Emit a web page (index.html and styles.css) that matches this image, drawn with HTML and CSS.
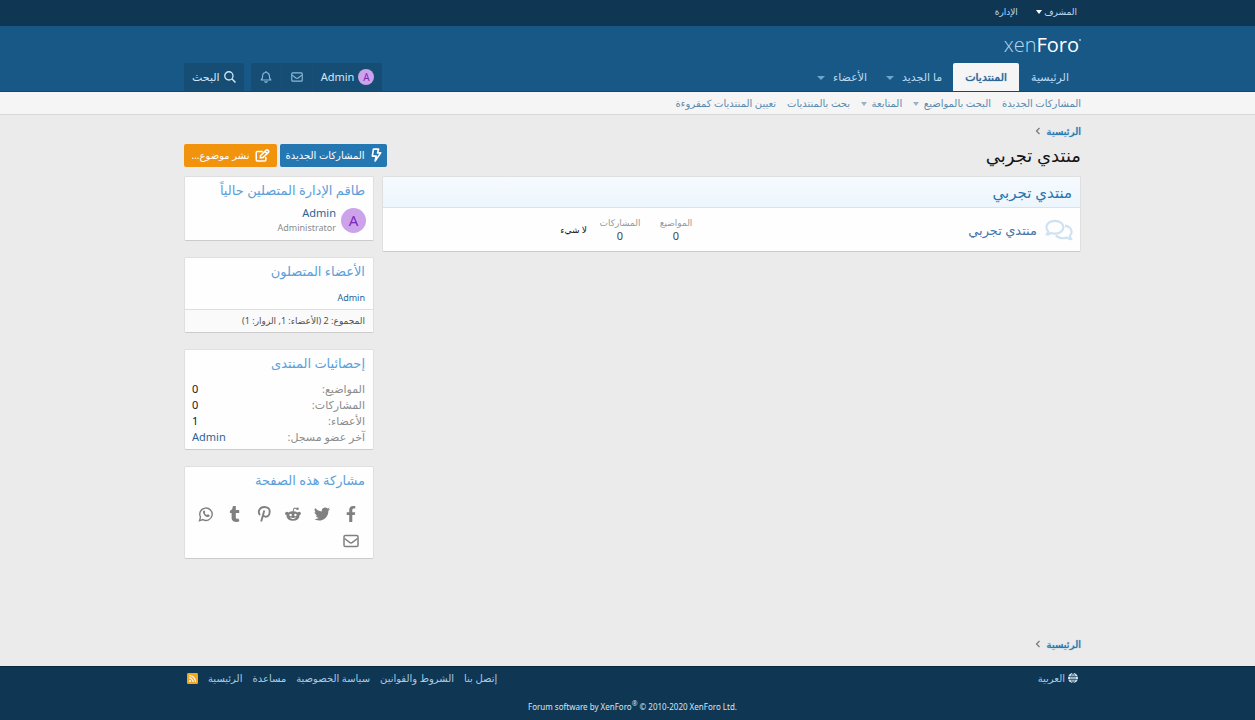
FILE: index.html
```html
<!DOCTYPE html>
<html lang="ar" dir="rtl">
<head>
<meta charset="utf-8">
<title>منتدي تجربي</title>
<link rel="stylesheet" href="styles.css">
</head>
<body>
<svg class="sprite" aria-hidden="true">
  <symbol id="mail" viewBox="0 0 16 16"><rect x="1" y="2.5" width="14" height="11" rx="1.3" fill="none" stroke="currentColor" stroke-width="1.5"/><path d="M1.5 5.5 L6.6 9.4 Q8 10.4 9.4 9.4 L14.5 5.5" fill="none" stroke="currentColor" stroke-width="1.5"/></symbol>
</svg>
<div class="staff-bar">
  <div class="inner staff-links">
    <a href="#">المشرف <span class="caret"></span></a>
    <a href="#">الإدارة</a>
  </div>
</div>
<header class="header">
  <div class="inner">
    <a class="logo" href="#" aria-label="xenForo"><span class="logo-thin">xen</span><span class="logo-bold">Foro</span><span class="logo-dot"></span></a>
  </div>
  <div class="inner nav">
    <nav class="tabs">
      <a class="tab" href="#">الرئيسية</a>
      <a class="tab tab-active" href="#">المنتديات</a>
      <a class="tab tab-menu" href="#">ما الجديد <span class="caret"></span></a>
      <a class="tab tab-menu" href="#">الأعضاء <span class="caret"></span></a>
    </nav>
    <div class="tools">
      <div class="tool-group">
        <a class="tool tool-user" href="#"><span class="avatar avatar-small">A</span>Admin</a>
        <a class="tool tool-icon" href="#" aria-label="الرسائل"><svg class="icon-small"><use href="#mail"/></svg></a>
        <a class="tool tool-icon" href="#" aria-label="التنبيهات"><svg class="icon-small" viewBox="0 0 16 16"><path d="M8 0v1.500M1.500 12h13c-1.500-1.300-2-2.200-2-5.500A4.400 4.400 0 0 0 3.500 6.500c0 3.300-.5 4.200-2 5.500zM6.200 13.500c.3 2.200 3.300 2.200 3.600 0" fill="none" stroke="currentColor" stroke-width="1.500" stroke-linejoin="round"/></svg></a>
      </div>
      <div class="tool-group">
        <a class="tool" href="#"><svg class="icon-search" viewBox="0 0 16 16"><circle cx="6.500" cy="6.500" r="5.500" fill="none" stroke="currentColor" stroke-width="1.700"/><path d="M10.400 10.400 15.300 15.300" stroke="currentColor" stroke-width="2"/></svg>البحث</a>
      </div>
    </div>
  </div>
</header>
<div class="subnav">
  <nav class="inner subnav-links">
    <a href="#">المشاركات الجديدة</a>
    <a href="#">البحث بالمواضيع <span class="caret"></span></a>
    <a href="#">المتابعة <span class="caret"></span></a>
    <a href="#">بحث بالمنتديات</a>
    <a href="#">تعيين المنتديات كمقروءة</a>
  </nav>
</div>
<main class="inner page">
  <nav class="crumbs"><a href="#">الرئيسية</a><svg class="chevron" viewBox="0 0 6 8"><path d="M4.500 1 1.500 4l3 3" fill="none" stroke="currentColor" stroke-width="1.200"/></svg></nav>
  <div class="title-row">
    <h1>منتدي تجربي</h1>
    <div class="actions">
      <button class="button button-blue" type="button"><svg class="icon-bolt" viewBox="0 0 14 16"><path d="M4 1.200h6L8.800 5.500h3.700L6 15l1.200-5.700H2.700z" fill="none" stroke="currentColor" stroke-width="1.900" stroke-linejoin="round"/></svg>المشاركات الجديدة</button>
      <button class="button button-orange" type="button"><svg class="icon-edit" viewBox="0 0 18 16"><path d="M9.500 3H2.600A1.300 1.300 0 0 0 1.300 4.300v9.200a1.300 1.300 0 0 0 1.300 1.300h9.200a1.300 1.300 0 0 0 1.300-1.300V9.800M6.300 10.900l.4-2.900 6.900-6.600a1.300 1.300 0 0 1 1.800 0l.9.900a1.300 1.300 0 0 1 0 1.800L9.400 10.600zM12 3l2.700 2.700" fill="none" stroke="currentColor" stroke-width="1.900" stroke-linejoin="round"/></svg>نشر موضوع...</button>
    </div>
  </div>
  <div class="columns">
    <section class="block forum">
      <h2 class="forum-head"><a href="#">منتدي تجربي</a></h2>
      <div class="node">
        <svg class="icon-chat" viewBox="0 0 30 24"><g fill="none" stroke="currentColor" stroke-width="2.400" stroke-linejoin="round"><path d="M10.500 2c5.200 0 9.300 3.100 9.300 7s-4.100 7-9.300 7c-1.500 0-2.800-.3-4-.7C5.200 16.200 3.500 17 1.500 17c1-1.100 1.600-2.300 1.800-3.500C2 12.300 1.200 10.700 1.200 9c0-3.900 4.100-7 9.300-7z"/><path d="M21.500 7.300c4.200.6 7.300 3.400 7.300 6.700 0 1.700-.8 3.300-2.100 4.500.2 1.200.8 2.400 1.800 3.500-2 0-3.700-.8-5-1.700-1.200.4-2.500.7-4 .7-3.300 0-6.300-1.300-7.900-3.300"/></g></svg>
        <h3 class="node-title"><a href="#">منتدي تجربي</a></h3>
        <dl class="stat"><dt>المواضيع</dt><dd>0</dd></dl>
        <dl class="stat"><dt>المشاركات</dt><dd>0</dd></dl>
        <div class="last">لا شيء</div>
      </div>
    </section>
    <aside class="sidebar">
      <section class="block">
        <h3 class="block-title"><a href="#">طاقم الإدارة المتصلين حالياً</a></h3>
        <div class="member">
          <span class="avatar">A</span>
          <div class="member-text"><a href="#">Admin</a><span>Administrator</span></div>
        </div>
      </section>
      <section class="block">
        <h3 class="block-title"><a href="#">الأعضاء المتصلون</a></h3>
        <a class="online" href="#">Admin</a>
        <div class="block-foot">المجموع: 2 (الأعضاء: 1, الزوار: 1)</div>
      </section>
      <section class="block">
        <h3 class="block-title">إحصائيات المنتدى</h3>
        <dl class="stats">
          <dt>المواضيع:</dt><dd>0</dd>
          <dt>المشاركات:</dt><dd>0</dd>
          <dt>الأعضاء:</dt><dd>1</dd>
          <dt>آخر عضو مسجل:</dt><dd><a href="#">Admin</a></dd>
        </dl>
      </section>
      <section class="block">
        <h3 class="block-title">مشاركة هذه الصفحة</h3>
        <div class="share">
          <a href="#" aria-label="Facebook"><svg viewBox="0 0 16 16"><path d="M6.200 16V9H3.700V6.200h2.500V4.100C6.200 1.500 7.700 0 10.100 0c1.100 0 2.200.2 2.200.2v2.400H11c-1.300 0-1.700.8-1.700 1.600v2h2.900L11.700 9H9.300v7z" fill="currentColor"/></svg></a>
          <a href="#" aria-label="Twitter"><svg viewBox="0 0 16 16"><path d="M14.400 4.700c.1 5.300-3.800 9.800-9.400 9.800-1.800 0-3.500-.5-5-1.400 1.700.2 3.500-.3 4.800-1.400-1.400 0-2.600-1-3-2.300.5.100 1 .1 1.500-.1C1.700 9 .6 7.700.6 6.100c.5.300 1 .4 1.500.4C.6 5.500.2 3.600 1.100 2.100c1.700 2 4 3.300 6.800 3.400C7.300 3.300 9 1.400 11.100 1.400c1 0 1.800.4 2.400 1 .7-.1 1.500-.4 2.100-.8-.2.800-.8 1.400-1.400 1.800.6-.1 1.300-.2 1.800-.5-.4.700-1 1.300-1.600 1.800z" fill="currentColor"/></svg></a>
          <a href="#" aria-label="Reddit"><svg viewBox="0 0 16 16"><path d="M8 5.800 9 2l3 .7" fill="none" stroke="currentColor"/><circle cx="12.500" cy="2.800" r="1.300" fill="currentColor"/><circle cx="1.900" cy="7.500" r="1.800" fill="currentColor"/><circle cx="14.100" cy="7.500" r="1.800" fill="currentColor"/><ellipse cx="8" cy="10" rx="6.500" ry="4.800" fill="currentColor"/><circle cx="5.600" cy="9" r="1.200" fill="#fff"/><circle cx="10.400" cy="9" r="1.200" fill="#fff"/><path d="M5.500 11.800q2.500 1.800 5 0" fill="none" stroke="#fff"/></svg></a>
          <a href="#" aria-label="Pinterest"><svg viewBox="0 0 16 16"><path d="M4 9C1.300 6 3.500 1 8.400 1c3.300 0 5.300 2 5.300 4.500 0 3.200-1.800 5.300-3.900 5.300-1.300 0-2.100-.6-2.400-1.500M8.300 4.500 5.200 15.500" fill="none" stroke="currentColor" stroke-width="1.900"/></svg></a>
          <a href="#" aria-label="Tumblr"><svg viewBox="0 0 16 16"><path d="M12.400 15c-.7.700-2 1-3.300 1-3.500 0-4.500-2.300-4.500-4.200V7H2.900V4.800C5 4 5.600 2.200 5.800.4c0-.2.200-.4.400-.4h2.600v4h3.400v3H8.800v4.500c0 1.300 1.200 1.600 2.700 1z" fill="currentColor"/></svg></a>
          <a href="#" aria-label="WhatsApp"><svg viewBox="0 0 16 16"><path d="M1.500 14.600l1-3.500A6.200 6.200 0 1 1 4.900 13.600z" fill="none" stroke="currentColor" stroke-width="1.400"/><path d="M5.700 4.600c.6-.4.900-.2 1.100.4l.5 1c.1.400-.4.700-.6 1 .6 1.100 1.300 1.700 2.400 2.100.4-.4.600-.9.900-.8l1.400.6c.5.200.1 1.500-.5 1.800-1.100.7-2.800.1-4.300-1.300C5 7.900 4.400 5.900 5.700 4.600z" fill="currentColor"/></svg></a>
          <a href="#" aria-label="Email"><svg><use href="#mail"/></svg></a>
        </div>
      </section>
    </aside>
  </div>
  <nav class="crumbs crumbs-bottom"><a href="#">الرئيسية</a><svg class="chevron" viewBox="0 0 6 8"><path d="M4.500 1 1.500 4l3 3" fill="none" stroke="currentColor" stroke-width="1.200"/></svg></nav>
</main>
<footer class="footer">
  <div class="inner footer-row">
    <a class="language" href="#"><svg class="icon-globe" viewBox="0 0 16 16"><circle cx="8" cy="8" r="8" fill="#d5e7f4"/><path d="M0 5.500h16M0 10.500h16M8 0v16M8 0C3.500 4 3.500 12 8 16M8 0c4.500 4 4.500 12 0 16" fill="none" stroke="#0f3652"/></svg>العربية</a>
    <nav class="footer-links">
      <a href="#">إتصل بنا</a>
      <a href="#">الشروط والقوانين</a>
      <a href="#">سياسة الخصوصية</a>
      <a href="#">مساعدة</a>
      <a href="#">الرئيسية</a>
      <a class="rss" href="#" aria-label="RSS"><svg viewBox="0 0 12 12"><rect width="12" height="12" rx="1.500" fill="#f5a81c"/><circle cx="3.300" cy="8.700" r="1.100" fill="#fff"/><path d="M2.300 5.300a4.400 4.400 0 0 1 4.400 4.400M2.300 2.700a7 7 0 0 1 7 7" fill="none" stroke="#fff" stroke-width="1.200"/></svg></a>
    </nav>
  </div>
  <div class="inner copyright" dir="ltr">Forum software by XenForo<sup>®</sup> © 2010-2020 XenForo Ltd.</div>
</footer>
</body>
</html>
```
FILE: styles.css
```css
* { box-sizing: border-box; }
body {
  margin: 0;
  min-height: 100vh;
  display: flex;
  flex-direction: column;
  background: #ebebeb;
  color: #141414;
  font: 11px/16px "Noto Sans", "DejaVu Sans", sans-serif;
}
a { color: #2a6496; text-decoration: none; }
h1, h2, h3, dl, dd { margin: 0; font-weight: 400; }
svg { display: block; flex: none; }
.sprite { position: absolute; width: 0; height: 0; }
.inner { width: 100%; padding-right: 174px; padding-left: 184px; }
.caret {
  display: inline-block;
  border: 3px solid transparent;
  border-top: 4px solid currentColor;
  border-bottom: 0;
  vertical-align: 1px;
}

.staff-bar { background: #0f3652; }
.staff-links { display: flex; gap: 18px; height: 26px; align-items: center; padding-right: 178px; padding-bottom: 2px; font-size: 9px; }
.staff-links a { color: #bcdcf2; }
.staff-links .caret { color: #fff; }

.header { background: #185886; border-bottom: 1px solid #13476b; }
.logo { display: flex; direction: ltr; justify-content: flex-end; height: 37px; align-items: center; font: 20px/20px "Open Sans", sans-serif; color: #fff; }
.logo-thin { color: #b5d6ec; font-weight: 300; }
.logo-bold { font-weight: 400; }
.logo-dot { width: 2px; height: 2px; margin-bottom: 10px; border-radius: 50%; background: #a5cae4; }
.nav { display: flex; justify-content: space-between; align-items: flex-end; }
.tabs { display: flex; align-items: flex-end; }
.tab { height: 28px; padding: 0 12px; line-height: 28px; font-size: 11px; color: #bcdcf2; }
.tab-active { background: #f5f5f5; border-radius: 2px 2px 0 0; color: #2a6496; text-shadow: 0 0 1px currentColor; }
.tab-menu { padding: 0 11px 0 8px; }
.tab-menu .caret { margin-right: 5px; color: #6fa5cb; border-width: 4px 4px 0; }
.tools { display: flex; gap: 7px; }
.tool-group { display: flex; height: 28px; background: #154d75; border-radius: 2px 2px 0 0; }
.tool { display: flex; align-items: center; gap: 4px; padding: 0 8px; color: #d5e7f4; font-size: 11px; border-left: 1px solid #17507a; }
.tool:last-child { border-left: 0; }
.tool-icon { padding: 0 9px; color: #8bbadb; }
.icon-small, .icon-search { width: 12px; height: 12px; }
.avatar { display: flex; align-items: center; justify-content: center; flex: none; width: 25px; height: 25px; border-radius: 50%; background: #cca3eb; color: #7a29b8; font-size: 15px; }
.avatar-small { width: 16px; height: 16px; font-size: 10px; }

.subnav { background: #f5f5f5; border-bottom: 1px solid #d8d8d8; }
.subnav-links { display: flex; gap: 11px; height: 22px; align-items: center; font-size: 10px; }
.subnav-links a { color: #5c8aae; }
.subnav-links .caret { margin-right: 2px; color: #9bb2c4; }

.page { flex: 1; display: flex; flex-direction: column; padding-top: 8px; }
.crumbs { display: flex; gap: 6px; align-items: center; font-size: 10px; }
.crumbs a { color: #2577b1; text-shadow: 0 0 1px currentColor; }
.chevron { width: 6px; height: 8px; color: #777; }
.crumbs-bottom { margin-top: auto; margin-bottom: 14px; }
.title-row { display: flex; justify-content: space-between; align-items: center; margin: 3px 0 8px; }
h1 { font-size: 18px; line-height: 26px; }
.actions { display: flex; gap: 3px; }
.button { display: flex; align-items: center; justify-content: center; gap: 5px; height: 23px; padding: 0 5px; border: 0; border-radius: 2px; color: #fff; font: 10px/16px "Noto Sans", "DejaVu Sans", sans-serif; }
.button-blue { min-width: 107px; background: #2577b1; }
.button-orange { min-width: 93px; background: #f2930d; }
.icon-bolt { width: 12px; height: 14px; }
.icon-edit { width: 15px; height: 13px; }

.columns { display: flex; gap: 8px; align-items: flex-start; }
.block { background: #fefefe; border: 1px solid #dfdfdf; border-bottom-color: #cbcbcb; border-radius: 2px; }
.forum { flex: 1; }
.forum-head { padding: 0 8px; line-height: 30px; font-size: 15px; background: linear-gradient(#f5faff, #edf6fd); border-bottom: 1px solid #d8e3ec; }
.forum-head a { color: #2577b1; }
.node { display: flex; align-items: center; height: 43px; padding: 0 7px; }
.icon-chat { width: 28px; height: 22px; color: #cfe2f2; }
.node-title { flex: 1; margin-right: 8px; font-size: 13px; line-height: 20px; }
.node-title a { color: #47a; }
.stat { width: 56px; text-align: center; }
.stat dt { color: #999; font-size: 9px; line-height: 13px; }
.stat dd { font-size: 11px; line-height: 14px; color: #444; }
.last { width: 202px; padding-right: 5px; font-size: 9px; }

.sidebar { flex: none; width: 190px; display: grid; gap: 16px; }
.block-title { padding: 0 8px; line-height: 27px; font-size: 13px; color: #5b9fdb; }
.block-title a { color: inherit; }
.member { display: flex; gap: 5px; padding: 1px 7px 5px; align-items: center; }
.member-text { display: flex; flex-direction: column; font-size: 11px; line-height: 15px; }
.member-text span { color: #8c8c8c; font-size: 9px; }
.online { display: block; padding: 5px 8px 3px; font-size: 9px; }
.block-foot { padding: 3px 8px; background: #fafafa; border-top: 1px solid #dfdfdf; color: #505050; font-size: 9px; }
.stats { display: grid; grid-template-columns: 1fr auto; padding: 4px 8px 4px 7px; font-size: 11px; }
.stats dt { color: #8c8c8c; }
.stats dd { text-align: left; direction: ltr; }
.share { display: flex; flex-wrap: wrap; gap: 11px 13px; padding: 12px 14px 9px 8px; }
.share a { color: #808080; }
.share svg { width: 16px; height: 16px; }

.footer { background: #0f3652; border-top: 1px solid #0a2940; color: #d5e7f4; }
.footer a { color: #a9cce5; }
.footer-row { display: flex; justify-content: space-between; padding-top: 3px; padding-right: 177px; padding-left: 187px; font-size: 10px; }
.language { display: flex; gap: 3px; align-items: center; }
.icon-globe { width: 10px; height: 10px; }
.footer-links { display: flex; gap: 10px; align-items: center; }
.rss svg { width: 11px; height: 11px; }
.copyright { padding-top: 13px; padding-bottom: 5px; text-align: center; font-size: 8px; }
.copyright sup { font-size: 7px; line-height: 0; }
```
